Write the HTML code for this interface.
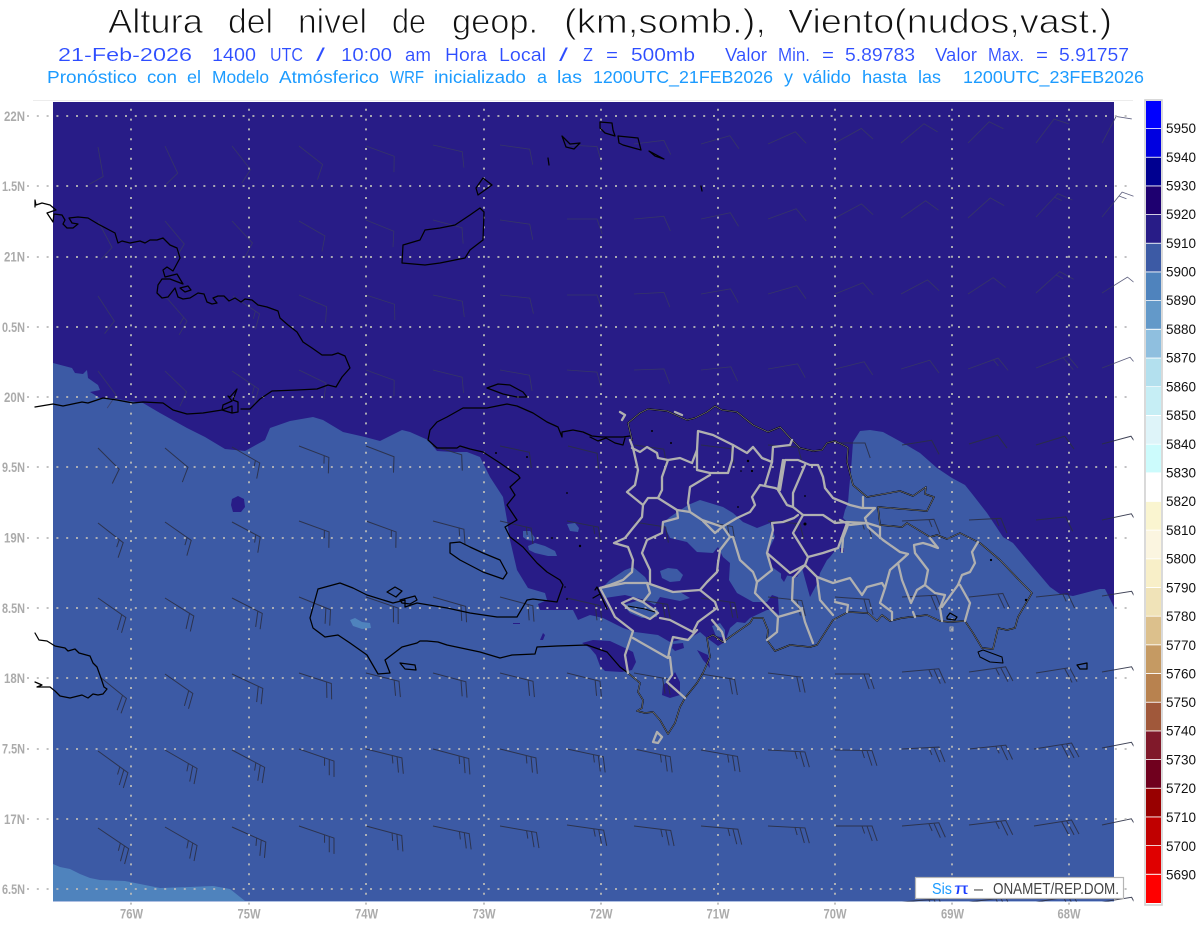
<!DOCTYPE html>
<html lang="es"><head><meta charset="utf-8"><title>Altura del nivel de geop.</title>
<style>
html,body{margin:0;padding:0;background:#fff}
svg{display:block}
text{font-family:"Liberation Sans",sans-serif}
.t{font-size:34px;fill:#111;stroke:#fff;stroke-width:.9}
.l2{font-size:18.5px;fill:#2d4dff;stroke:#fff;stroke-width:.12}
.l3{font-size:17.5px;fill:#1c9bff}
.ax{font-size:13.5px;font-weight:700;fill:#ababab}
.lg{font-size:13.5px;fill:#111}
</style></head><body>
<svg width="1200" height="927" viewBox="0 0 1200 927" xmlns="http://www.w3.org/2000/svg">
<defs>
<clipPath id="bc"><rect x="30" y="100" width="1103.5" height="801.5"/></clipPath>
<path id="a" d="M0 0H30l5.2 15"/>
<path id="b" d="M0 0H32l5.2 15M27 0l2.6 7.5"/>
<path id="c" d="M0 0H34l5.2 15M29 0l5.2 15"/>
<path id="d" d="M0 0H37l5.2 15M32 0l5.2 15M27 0l2.6 7.5"/>
<path id="e" d="M0 0H38l5.2 15M33 0l5.2 15M28 0l5.2 15"/>
</defs>
<rect width="1200" height="927" fill="#fff"/>

<!-- Titles -->
<g>
<text class="t" x="108" y="33" textLength="95" lengthAdjust="spacingAndGlyphs">Altura</text>
<text class="t" x="228" y="33" textLength="45" lengthAdjust="spacingAndGlyphs">del</text>
<text class="t" x="298" y="33" textLength="69" lengthAdjust="spacingAndGlyphs">nivel</text>
<text class="t" x="392" y="33" textLength="34" lengthAdjust="spacingAndGlyphs">de</text>
<text class="t" x="452" y="33" textLength="86" lengthAdjust="spacingAndGlyphs">geop.</text>
<text class="t" x="564" y="33" textLength="202" lengthAdjust="spacingAndGlyphs">(km,somb.),</text>
<text class="t" x="788" y="33" textLength="324" lengthAdjust="spacingAndGlyphs">Viento(nudos,vast.)</text>
</g>
<g>
<text class="l2" x="58" y="61" textLength="134" lengthAdjust="spacingAndGlyphs">21-Feb-2026</text>
<text class="l2" x="212" y="61" textLength="44" lengthAdjust="spacingAndGlyphs">1400</text>
<text class="l2" x="270" y="61" textLength="33" lengthAdjust="spacingAndGlyphs">UTC</text>
<text class="l2" x="316" y="61" textLength="9" lengthAdjust="spacingAndGlyphs">/</text>
<text class="l2" x="341" y="61" textLength="51" lengthAdjust="spacingAndGlyphs">10:00</text>
<text class="l2" x="405" y="61" textLength="26" lengthAdjust="spacingAndGlyphs">am</text>
<text class="l2" x="445" y="61" textLength="42" lengthAdjust="spacingAndGlyphs">Hora</text>
<text class="l2" x="499" y="61" textLength="47" lengthAdjust="spacingAndGlyphs">Local</text>
<text class="l2" x="559" y="61" textLength="9" lengthAdjust="spacingAndGlyphs">/</text>
<text class="l2" x="583" y="61" textLength="10" lengthAdjust="spacingAndGlyphs">Z</text>
<text class="l2" x="606" y="61" textLength="12" lengthAdjust="spacingAndGlyphs">=</text>
<text class="l2" x="631" y="61" textLength="64" lengthAdjust="spacingAndGlyphs">500mb</text>
<text class="l2" x="725" y="61" textLength="42" lengthAdjust="spacingAndGlyphs">Valor</text>
<text class="l2" x="778" y="61" textLength="32" lengthAdjust="spacingAndGlyphs">Min.</text>
<text class="l2" x="822" y="61" textLength="12" lengthAdjust="spacingAndGlyphs">=</text>
<text class="l2" x="845" y="61" textLength="70" lengthAdjust="spacingAndGlyphs">5.89783</text>
<text class="l2" x="935" y="61" textLength="42" lengthAdjust="spacingAndGlyphs">Valor</text>
<text class="l2" x="988" y="61" textLength="36" lengthAdjust="spacingAndGlyphs">Max.</text>
<text class="l2" x="1036" y="61" textLength="12" lengthAdjust="spacingAndGlyphs">=</text>
<text class="l2" x="1059" y="61" textLength="70" lengthAdjust="spacingAndGlyphs">5.91757</text>
</g>
<g>
<text class="l3" x="47" y="83" textLength="90" lengthAdjust="spacingAndGlyphs">Pronóstico</text>
<text class="l3" x="147" y="83" textLength="30" lengthAdjust="spacingAndGlyphs">con</text>
<text class="l3" x="187" y="83" textLength="14" lengthAdjust="spacingAndGlyphs">el</text>
<text class="l3" x="212" y="83" textLength="57" lengthAdjust="spacingAndGlyphs">Modelo</text>
<text class="l3" x="279" y="83" textLength="100" lengthAdjust="spacingAndGlyphs">Atmósferico</text>
<text class="l3" x="390" y="83" textLength="34" lengthAdjust="spacingAndGlyphs">WRF</text>
<text class="l3" x="434" y="83" textLength="92" lengthAdjust="spacingAndGlyphs">inicializado</text>
<text class="l3" x="537" y="83" textLength="10" lengthAdjust="spacingAndGlyphs">a</text>
<text class="l3" x="557" y="83" textLength="25" lengthAdjust="spacingAndGlyphs">las</text>
<text class="l3" x="593" y="83" textLength="180" lengthAdjust="spacingAndGlyphs">1200UTC_21FEB2026</text>
<text class="l3" x="784" y="83" textLength="9" lengthAdjust="spacingAndGlyphs">y</text>
<text class="l3" x="803" y="83" textLength="48" lengthAdjust="spacingAndGlyphs">válido</text>
<text class="l3" x="862" y="83" textLength="45" lengthAdjust="spacingAndGlyphs">hasta</text>
<text class="l3" x="918" y="83" textLength="23" lengthAdjust="spacingAndGlyphs">las</text>
<text class="l3" x="963" y="83" textLength="181" lengthAdjust="spacingAndGlyphs">1200UTC_23FEB2026</text>
</g>

<!-- frame line -->
<path d="M33 100.5H1133" stroke="#ececec" stroke-width="1"/>

<!-- Map fills -->
<rect x="53" y="102" width="1061" height="799" fill="#3c5aa5"/>
<rect x="53" y="901" width="1061" height="1" fill="#aebfe2"/>
<path fill="#281c87" d="M53 102H1114V607L1105 589 1100 589 1073 596 1060 594 1050 587 1033 567 1013 543 1003 537 987 513 973 495 965 485 952 478 937 468 920 453 903 443 883 432 870 430 860 431 853 442 851 470 849 490 848 503 845 510 843 518 847 522 844 533 838 547 830 557 827 560 820 573 818 582 810 597 802 568 797 577 783 575 772 567 767 553 775 537 770 523 757 528 743 522 733 513 723 507 700 500 688 505 670 517 663 523 670 538 687 542 697 552 713 553 718 547 723 557 730 563 729 580 737 593 753 602 767 602 772 595 778 597 779 615 773 610 767 610 750 618 745 623 737 622 730 628 725 642 718 646 707 638 700 632 690 638 670 642 658 635 635 632 623 628 603 618 590 615 578 620 573 610 540 610 538 604 547 600 545 593 528 588 517 570 510 540 507 520 503 497 490 477 480 457 467 452 453 452 437 451 428 440 410 432 402 430 380 441 365 437 343 432 323 420 313 417 290 421 270 428 265 440 245 451 225 449 205 437 187 428 160 413 143 403 110 398 100 398 90 392 100 390 98 385 88 378 87 370 83 374 75 373 72 368 53 363Z"/>
<g fill="#3c5aa5">
<path d="M567 524 575 523 579 528 578 532 570 531Z"/>
<path d="M523 531 530 531 535 538 534 541 527 540 523 537Z"/>
<path d="M528 546 535 543 545 546 555 551 557 556 548 556 535 553 529 550Z"/>
<path d="M600 590 610 580 625 570 633 567 645 577 650 585 667 590 680 592 690 598 680 601 660 597 655 605 645 600 625 595 605 598Z"/>
<path d="M640 600 658 610 657 617 642 618 630 613 623 605Z"/>
<path d="M660 571 668 568 677 569 683 575 680 581 670 582 662 578Z"/>
<path d="M712 626 720 623 725 630 725 638 716 636Z"/>
<path d="M610 580 620 576 635 574 640 590 615 590Z"/>
</g>
<g fill="#281c87">
<path d="M232 499 238 496 244 499 245 507 241 512 233 512 231 505Z"/>
<path d="M582 643 593 640 610 641 625 648 633 652 636 662 632 670 622 672 605 671 600 666 596 655 590 648Z"/>
<path d="M673 644 683 643 684 648 675 651 672 648Z"/>
<path d="M697 650 708 655 710 668 703 660Z"/>
<path d="M675 672 680 682 680 695 670 698 662 695 663 685 670 680Z"/>
<path d="M781 572 785 570 787 576 784 582 781 578Z"/>
<path d="M540 640 543 633 545 635 543 640Z"/>
<path d="M513 623H520V624H513Z"/>
<path d="M840 548H844V552H840Z"/>
</g>
<g fill="#4f83bd">
<path d="M350 620 355 618 362 622 370 623 371 628 362 629 353 626Z"/>
<path d="M53 864 60 867 70 869 80 874 90 878 100 880 125 881 140 884 160 888 190 887 213 886 230 889 245 901H53Z"/>
</g>

<!-- Wind barbs -->
<g clip-path="url(#bc)" fill="none" stroke="#3a3c62" stroke-width=".85" opacity=".8">
<use href="#a" transform="translate(98 147)rotate(80)"/><use href="#a" transform="translate(165 146)rotate(65)"/><use href="#a" transform="translate(232 146)rotate(52)"/><use href="#a" transform="translate(299 146)rotate(38)"/><use href="#a" transform="translate(366 146)rotate(20)"/><use href="#a" transform="translate(433 145)rotate(13)"/><use href="#a" transform="translate(500 145)rotate(8)"/><use href="#a" transform="translate(567 145)rotate(3)"/><use href="#a" transform="translate(634 144)rotate(-7)"/><use href="#a" transform="translate(701 144)rotate(-16)"/><use href="#a" transform="translate(768 144)rotate(-24)"/><use href="#a" transform="translate(835 143)rotate(-29)"/><use href="#a" transform="translate(901 143)rotate(-40)"/><use href="#a" transform="translate(968 143)rotate(-45)"/><use href="#a" transform="translate(1036 143)rotate(-53)"/><use href="#a" transform="translate(1102 143)rotate(-62)"/>
<use href="#a" transform="translate(98 221)rotate(62)"/><use href="#a" transform="translate(165 221)rotate(50)"/><use href="#a" transform="translate(232 221)rotate(47)"/><use href="#a" transform="translate(299 221)rotate(30)"/><use href="#a" transform="translate(366 220)rotate(22)"/><use href="#a" transform="translate(433 220)rotate(15)"/><use href="#a" transform="translate(500 220)rotate(8)"/><use href="#a" transform="translate(567 219)rotate(0)"/><use href="#a" transform="translate(634 219)rotate(-5)"/><use href="#a" transform="translate(701 219)rotate(-12)"/><use href="#a" transform="translate(768 219)rotate(-20)"/><use href="#a" transform="translate(835 218)rotate(-28)"/><use href="#a" transform="translate(901 218)rotate(-35)"/><use href="#a" transform="translate(968 218)rotate(-42)"/><use href="#b" transform="translate(1036 217)rotate(-47)"/><use href="#b" transform="translate(1102 217)rotate(-51)"/>
<use href="#a" transform="translate(98 296)rotate(57)"/><use href="#b" transform="translate(166 297)rotate(49)"/><use href="#b" transform="translate(233 296)rotate(34)"/><use href="#a" transform="translate(299 295)rotate(23)"/><use href="#a" transform="translate(366 295)rotate(18)"/><use href="#a" transform="translate(433 295)rotate(12)"/><use href="#a" transform="translate(500 295)rotate(6)"/><use href="#a" transform="translate(567 295)rotate(0)"/><use href="#a" transform="translate(634 294)rotate(-3)"/><use href="#a" transform="translate(701 294)rotate(-10)"/><use href="#a" transform="translate(768 294)rotate(-16)"/><use href="#a" transform="translate(835 294)rotate(-22)"/><use href="#a" transform="translate(901 294)rotate(-28)"/><use href="#a" transform="translate(968 294)rotate(-33)"/><use href="#b" transform="translate(1036 293)rotate(-42)"/><use href="#a" transform="translate(1102 293)rotate(-32)"/>
<use href="#a" transform="translate(98 371)rotate(53)"/><use href="#a" transform="translate(165 371)rotate(44)"/><use href="#b" transform="translate(232 371)rotate(34)"/><use href="#a" transform="translate(299 370)rotate(26)"/><use href="#a" transform="translate(366 370)rotate(20)"/><use href="#a" transform="translate(433 370)rotate(14)"/><use href="#a" transform="translate(500 370)rotate(10)"/><use href="#a" transform="translate(567 370)rotate(4)"/><use href="#a" transform="translate(634 370)rotate(-2)"/><use href="#a" transform="translate(701 370)rotate(-6)"/><use href="#a" transform="translate(768 369)rotate(-10)"/><use href="#a" transform="translate(835 369)rotate(-14)"/><use href="#a" transform="translate(901 369)rotate(-17)"/><use href="#b" transform="translate(968 369)rotate(-20)"/><use href="#c" transform="translate(1036 368)rotate(-21)"/><use href="#a" transform="translate(1102 368)rotate(-21)"/>
</g>
<g clip-path="url(#bc)" fill="none" stroke="#2b2f45" stroke-width="1" opacity=".9">
<use href="#a" transform="translate(98 448)rotate(45)"/><use href="#a" transform="translate(165 448)rotate(40)"/><use href="#b" transform="translate(232 447)rotate(30)"/><use href="#b" transform="translate(299 446)rotate(21)"/><use href="#a" transform="translate(366 446)rotate(21)"/><use href="#a" transform="translate(433 446)rotate(17)"/><use href="#a" transform="translate(500 446)rotate(12)"/><use href="#a" transform="translate(568 446)rotate(14)"/><use href="#a" transform="translate(634 445)rotate(8)"/><use href="#a" transform="translate(701 445)rotate(7)"/><use href="#a" transform="translate(768 445)rotate(4)"/><use href="#a" transform="translate(835 443)rotate(0)"/><use href="#a" transform="translate(902 445)rotate(-9)"/><use href="#a" transform="translate(969 444)rotate(-17)"/><use href="#a" transform="translate(1036 445)rotate(-17)"/><use href="#a" transform="translate(1102 444)rotate(-15)"/>
<use href="#b" transform="translate(98 523)rotate(38)"/><use href="#b" transform="translate(165 522)rotate(35)"/><use href="#b" transform="translate(232 522)rotate(28)"/><use href="#b" transform="translate(299 521)rotate(20)"/><use href="#b" transform="translate(366 521)rotate(20)"/><use href="#b" transform="translate(433 521)rotate(15)"/><use href="#b" transform="translate(500 521)rotate(13)"/><use href="#b" transform="translate(567 521)rotate(11)"/><use href="#b" transform="translate(634 522)rotate(9)"/><use href="#b" transform="translate(701 521)rotate(10)"/><use href="#b" transform="translate(768 521)rotate(5)"/><use href="#b" transform="translate(835 521)rotate(2)"/><use href="#b" transform="translate(902 521)rotate(-3)"/><use href="#b" transform="translate(969 520)rotate(-3)"/><use href="#a" transform="translate(1036 520)rotate(-6)"/><use href="#a" transform="translate(1102 520)rotate(-12)"/>
<use href="#c" transform="translate(98 598)rotate(35)"/><use href="#c" transform="translate(165 598)rotate(32)"/><use href="#c" transform="translate(232 598)rotate(27)"/><use href="#c" transform="translate(299 597)rotate(22)"/><use href="#c" transform="translate(366 597)rotate(19)"/><use href="#c" transform="translate(433 597)rotate(16)"/><use href="#c" transform="translate(500 597)rotate(15)"/><use href="#c" transform="translate(567 598)rotate(13)"/><use href="#c" transform="translate(634 599)rotate(9)"/><use href="#c" transform="translate(701 598)rotate(8)"/><use href="#c" transform="translate(768 597)rotate(6)"/><use href="#c" transform="translate(835 597)rotate(4)"/><use href="#c" transform="translate(902 597)rotate(-3)"/><use href="#c" transform="translate(969 597)rotate(-6)"/><use href="#b" transform="translate(1036 597)rotate(-6)"/><use href="#a" transform="translate(1102 596)rotate(-9)"/>
<use href="#c" transform="translate(100 677)rotate(39)"/><use href="#c" transform="translate(165 674)rotate(35)"/><use href="#c" transform="translate(232 674)rotate(25)"/><use href="#c" transform="translate(299 673)rotate(18)"/><use href="#c" transform="translate(366 673)rotate(14)"/><use href="#c" transform="translate(433 673)rotate(15)"/><use href="#c" transform="translate(500 673)rotate(14)"/><use href="#c" transform="translate(567 673)rotate(14)"/><use href="#c" transform="translate(634 673)rotate(10)"/><use href="#c" transform="translate(701 674)rotate(9)"/><use href="#c" transform="translate(768 673)rotate(7)"/><use href="#c" transform="translate(835 674)rotate(0)"/><use href="#d" transform="translate(902 672)rotate(-5)"/><use href="#d" transform="translate(969 672)rotate(-8)"/><use href="#c" transform="translate(1036 673)rotate(-9)"/><use href="#a" transform="translate(1102 672)rotate(-10)"/>
<use href="#d" transform="translate(98 751)rotate(36)"/><use href="#d" transform="translate(165 750)rotate(30)"/><use href="#d" transform="translate(232 750)rotate(28)"/><use href="#d" transform="translate(299 749)rotate(19)"/><use href="#d" transform="translate(366 749)rotate(14)"/><use href="#d" transform="translate(433 749)rotate(15)"/><use href="#d" transform="translate(500 749)rotate(14)"/><use href="#d" transform="translate(567 749)rotate(12)"/><use href="#d" transform="translate(634 749)rotate(12)"/><use href="#d" transform="translate(701 750)rotate(10)"/><use href="#d" transform="translate(768 750)rotate(3)"/><use href="#d" transform="translate(835 750)rotate(1)"/><use href="#d" transform="translate(902 749)rotate(-3)"/><use href="#d" transform="translate(969 749)rotate(-6)"/><use href="#e" transform="translate(1034 749)rotate(-9)"/><use href="#a" transform="translate(1102 748)rotate(-11)"/>
<use href="#d" transform="translate(98 828)rotate(34)"/><use href="#d" transform="translate(165 827)rotate(30)"/><use href="#d" transform="translate(232 827)rotate(24)"/><use href="#d" transform="translate(299 826)rotate(19)"/><use href="#d" transform="translate(366 826)rotate(15)"/><use href="#d" transform="translate(433 826)rotate(12)"/><use href="#d" transform="translate(500 826)rotate(10)"/><use href="#d" transform="translate(567 825)rotate(8)"/><use href="#d" transform="translate(634 826)rotate(7)"/><use href="#d" transform="translate(701 826)rotate(5)"/><use href="#d" transform="translate(768 826)rotate(3)"/><use href="#d" transform="translate(835 826)rotate(0)"/><use href="#d" transform="translate(902 826)rotate(-5)"/><use href="#d" transform="translate(969 825)rotate(-7)"/><use href="#e" transform="translate(1034 826)rotate(-9)"/><use href="#a" transform="translate(1102 825)rotate(-12)"/>
<use href="#d" transform="translate(902 902)rotate(-5)"/><use href="#d" transform="translate(969 902)rotate(-7)"/><use href="#e" transform="translate(1036 902)rotate(-9)"/><use href="#a" transform="translate(1102 902)rotate(-9)"/>
</g>

<!-- Grid -->
<g fill="none" stroke="#b9b9b9" stroke-width="1.8" stroke-dasharray="2 7.8">
<path d="M27 116H1133M27 186H1133M27 257H1133M27 327H1133M27 397H1133M27 467H1133M27 538H1133M27 608H1133M27 678H1133M27 749H1133M27 819H1133M27 889H1133"/>
<path d="M131 108.8V907M249 108.8V907M366 108.8V907M484 108.8V907M601 108.8V907M718 108.8V907M835 108.8V907M952 108.8V907M1069 108.8V907"/>
</g>

<!-- Coasts -->
<g fill="none" stroke="#000" stroke-width="1.25" stroke-linejoin="round" stroke-linecap="round">
<path d="M35 207 35 200 36 205 42 203 50 205 56 210 47 213 53 222 54 214 62 215 65 220 63 224 67 228 73 228 78 224 72 223 69 218 78 217 88 218 98 224 115 233 118 243 122 241 130 243 140 241 145 243 150 240 157 240 163 238 170 245 177 248 180 258 173 271 167 267 163 270 165 277 177 274 183 284 170 279 162 279 158 285 157 293 162 298 168 297 175 288 178 297 183 299 190 298 198 293 204 294 207 302 212 304 217 303 213 298 218 296 224 296 229 301 235 298 241 302 245 299 252 300 258 305 267 307 278 311 280 318 288 325 297 332 303 342 312 348 322 355 332 355 338 353 345 356 350 368 342 377 336 387 328 385 317 389 297 390 272 391 260 399 250 409 241 409"/>
<path d="M35 407 53 404 63 406 82 402 88 403 103 398 117 400 133 403 143 402 163 403 173 410 187 414 203 413 222 410 232 413 238 412 238 402 233 400 237 389 230 397 228 396 232 401 223 405 222 410 232 406 232 413"/>
<path d="M180 288 188 286 191 290 185 292Z"/>
<path d="M35 633 39 640 47 641 55 646 65 648 68 651 75 649 79 653 90 656 93 663 97 667 101 678 104 687 107 689 103 694 98 695 93 694 88 698 82 695 70 698 60 696 55 691 50 687 37 687 42 685 35 682"/>
<path d="M548 158 549 165"/>
<path d="M562 136 566 147 574 149 580 143 570 144Z"/>
<path d="M600 122 612 123 613 130 615 136 605 133 600 128Z"/>
<path d="M618 136 638 138 641 150 623 145 619 143Z"/>
<path d="M649 151 664 159 655 156Z"/>
<path d="M701 186 702 191"/>
<path d="M476 188 483 178 492 185 478 195Z"/>
<path d="M402 263 403 245 420 240 425 230 440 228 455 225 470 215 480 208 484 212 483 240 470 250 465 258 440 263 425 265Z"/>
<path d="M487 388 498 384 510 385 523 392 527 397 517 397 503 394Z"/>
<path d="M450 543 460 542 470 547 483 553 500 560 507 573 503 579 483 572 460 560 450 553Z"/>
<path d="M630 436 623 437 602 437 592 436 583 432 573 430 562 432 562 437 558 427 547 422 533 413 517 406 507 404 487 408 463 408 447 417 437 422 430 430 428 440 437 448 457 448 460 446 470 449 483 452 500 463 510 470 518 475 520 478 510 487 515 495 507 505 517 520 505 527 510 537 523 547 537 563 547 572 560 580 563 585 557 602 533 599 527 600 517 617 497 617 470 613 447 608 417 603 405 607 405 600 393 603 367 595 353 588 340 583 318 589 310 618 313 628 325 637 338 635 350 643 367 655 378 674 390 673 385 660 402 647 417 643 420 641 427 641 438 642 447 645 480 652 500 658 512 655 535 654 537 647 557 646 587 645 607 652 620 667 628 673"/>
<path d="M387 592 395 587 402 591 396 597Z"/>
<path d="M400 600 415 596 417 600 410 604 402 603Z"/>
<path d="M400 663 415 665 416 670 405 669Z"/>
<path d="M595 590 597 587 607 609M593 598 600 594"/>
<path d="M590 437 598 441 606 438 615 443 623 445 625 438"/>
<path d="M1077 665 1087 663 1087 669 1080 669Z"/>
<path d="M947 617 950 613 957 617 955 620 947 619Z"/>
<path d="M628 673 640 683 638 692 643 700 642 708 637 711 645 713 653 712 660 720 668 734 675 723 680 707 685 698 697 683 703 673 710 657 707 638 713 635 723 642 737 632 750 623 753 618 763 618 768 630 767 640 772 647 775 651 790 645 810 647 817 645 833 620 848 612 868 613 877 621 882 615 890 621 902 618 927 615 940 621 950 622 965 621 973 633 982 648 993 649 998 628 1007 630 1015 628 1018 617 1025 605 1032 593 1022 583 1000 560 980 543 960 533 947 539 937 535 930 537 907 523 902 527 880 525 878 507 927 511 934 497 925 494 926 487 913 496 900 491 867 497 853 485 847 462 848 448 847 447 835 441 827 443 822 450 813 451 800 448 792 440 780 427 768 432 753 425 737 412 722 410 715 406 707 412 695 418 687 420 667 411 648 409 640 413 628 423 632 440" stroke-width="1.5"/>
<path d="M628 673 640 683 638 692 643 700 642 708 637 711 645 713 653 712 660 720 668 734 675 723 680 707 685 698 697 683 703 673 710 657 707 638 713 635 723 642 737 632 750 623 753 618 763 618 768 630 767 640 772 647 775 651 790 645 810 647 817 645 833 620 848 612 868 613 877 621 882 615 890 621 902 618 927 615 940 621 950 622 965 621 973 633 982 648 993 649 998 628 1007 630 1015 628 1018 617 1025 605 1032 593 1022 583 1000 560 980 543 960 533 947 539 937 535 930 537 907 523 902 527 880 525 878 507 927 511 934 497 925 494 926 487 913 496 900 491 867 497 853 485 847 462 848 448 847 447 835 441 827 443 822 450 813 451 800 448 792 440 780 427 768 432 753 425 737 412 722 410 715 406 707 412 695 418 687 420 667 411 648 409 640 413 628 423 632 440" stroke="#8d8d8d" stroke-width=".6"/>
<path d="M978 652 983 650 1002 657 1003 663 990 662 980 657Z" stroke-width="1"/>
</g>
<g fill="#000"><circle cx="991" cy="560" r="1.1"/><circle cx="1026" cy="600" r="1.2"/><circle cx="652" cy="431" r="1"/><circle cx="671" cy="443" r="1"/><circle cx="748" cy="461" r="1.2"/><circle cx="752" cy="471" r="1.1"/><circle cx="741" cy="471" r=".8"/><circle cx="738" cy="507" r=".9"/><circle cx="805" cy="496" r=".9"/><circle cx="805" cy="524" r="1.5"/><circle cx="567" cy="493" r=".9"/><circle cx="580" cy="546" r="1.2"/><circle cx="552" cy="538" r=".9"/><circle cx="496" cy="453" r="1"/><circle cx="527" cy="457" r="1"/><circle cx="567" cy="599" r=".9"/><circle cx="565" cy="587" r=".8"/></g>

<!-- Province borders -->
<g fill="none" stroke="#b0b0b0" stroke-width="2.3" stroke-linejoin="round" stroke-linecap="round">
<path d="M630 440 633 448 638 470 635 485 627 492 643 505 642 517 633 528 625 538 614 543 628 547 633 560 632 572 623 580 610 585 600 588 610 607 615 617 633 631 625 655 628 673"/>
<path d="M632 448 640 452 647 447 657 453 658 458 668 460 680 458 692 463 697 450 698 431 713 435 733 445 747 453 753 447 762 458 772 462 773 447 790 445 792 440"/>
<path d="M668 460 662 477 662 490 658 498 677 510 690 512 702 520 715 533 722 527 737 518 750 512 755 505 752 497 760 485 775 488 780 490 785 460 798 460 810 465 818 465 823 477 825 488 833 498 850 505 862 508 875 508 865 518 868 527 883 540 900 552 908 554 898 563 890 570 885 588 880 603 892 612 892 620"/>
<path d="M772 462 765 485"/>
<path d="M805 465 793 493 793 507 803 515 823 515 835 523 847 522 867 523"/>
<path d="M783 460 778 490 787 505 793 507"/>
<path d="M803 515 793 533 808 557 823 553 838 548 847 523"/>
<path d="M808 557 805 565 790 573 767 553 773 530 772 523 783 522 794 518 798 515"/>
<path d="M697 450 697 470 710 473 728 473 732 460 733 445"/>
<path d="M710 475 690 487 688 503 690 512"/>
<path d="M658 498 648 498 643 505"/>
<path d="M677 510 678 518 663 522 662 533 647 540 642 553 650 570 650 583"/>
<path d="M702 520 723 527 730 537 720 550 718 563 717 572 707 582 700 590"/>
<path d="M730 537 733 537 740 560 753 572 757 582 772 570 767 553"/>
<path d="M757 582 755 593 778 617 777 632 767 640"/>
<path d="M793 578 792 600 802 610 778 617"/>
<path d="M802 610 805 622 813 643"/>
<path d="M793 578 805 565 817 577 833 583 850 578 862 595 867 587 882 583 885 588"/>
<path d="M817 577 820 600 833 615"/>
<path d="M835 602 848 605 847 612"/>
<path d="M600 588 625 583 647 583 673 592 700 590 715 602 717 608 698 622 693 632 670 620 660 618"/>
<path d="M697 630 688 640 673 637 670 648 668 658 633 638"/>
<path d="M670 657 672 675 667 682 685 698"/>
<path d="M647 583 650 593 643 602"/>
<path d="M712 620 722 632 725 642"/>
<path d="M622 603 633 598 643 602 658 613 650 619 630 610Z"/>
<path d="M653 742 657 732 662 737 658 743Z"/>
<path d="M620 412 625 415 622 420M675 412 682 415"/>
<path d="M863 497 863 508"/>
<path d="M840 520 850 525 867 523 880 527 880 538"/>
<path d="M848 525 843 538 842 552"/>
<path d="M898 563 902 580 911 603 917 590 925 585 928 570 915 553 914 545 923 543 930 545 938 548 930 538"/>
<path d="M925 585 935 593 945 595 940 608 942 621"/>
<path d="M958 585 942 607"/>
<path d="M958 585 962 575 970 572 975 563 972 552 978 542"/>
<path d="M960 585 970 603 965 621"/>
<path d="M913 612 915 617"/>
<path d="M950 627 953 627 953 631 950 631Z" stroke-width="1"/>
</g>
<path d="M628 606 645 609 655 612" fill="none" stroke="#000" stroke-width="1"/>

<!-- Logo box -->
<rect x="915.5" y="877.5" width="208" height="21" fill="#fff" stroke="#b5b5b5" stroke-width="1.2"/>
<text x="932" y="894" font-size="16" fill="#1c9bff" textLength="20" lengthAdjust="spacingAndGlyphs">Sis</text>
<text x="954" y="894" font-size="16" fill="#1a3cff" textLength="15" lengthAdjust="spacingAndGlyphs">π</text>
<text x="974" y="894" font-size="16" fill="#444" textLength="9" lengthAdjust="spacingAndGlyphs">–</text>
<text x="993" y="894" font-size="16" fill="#444" textLength="126" lengthAdjust="spacingAndGlyphs">ONAMET/REP.DOM.</text>

<!-- Axis labels -->
<g text-anchor="end">
<text class="ax" x="25" y="121" textLength="21" lengthAdjust="spacingAndGlyphs">22N</text><text class="ax" x="25" y="191" textLength="23" lengthAdjust="spacingAndGlyphs">1.5N</text><text class="ax" x="25" y="261.5" textLength="21" lengthAdjust="spacingAndGlyphs">21N</text><text class="ax" x="25" y="332" textLength="23" lengthAdjust="spacingAndGlyphs">0.5N</text><text class="ax" x="25" y="402" textLength="21" lengthAdjust="spacingAndGlyphs">20N</text><text class="ax" x="25" y="472" textLength="23" lengthAdjust="spacingAndGlyphs">9.5N</text><text class="ax" x="25" y="542.5" textLength="21" lengthAdjust="spacingAndGlyphs">19N</text><text class="ax" x="25" y="613" textLength="23" lengthAdjust="spacingAndGlyphs">8.5N</text><text class="ax" x="25" y="683" textLength="21" lengthAdjust="spacingAndGlyphs">18N</text><text class="ax" x="25" y="753.5" textLength="23" lengthAdjust="spacingAndGlyphs">7.5N</text><text class="ax" x="25" y="824" textLength="21" lengthAdjust="spacingAndGlyphs">17N</text><text class="ax" x="25" y="894" textLength="23" lengthAdjust="spacingAndGlyphs">6.5N</text>
</g>
<g text-anchor="middle">
<text class="ax" x="131.5" y="918.5" textLength="23" lengthAdjust="spacingAndGlyphs">76W</text><text class="ax" x="249" y="918.5" textLength="23" lengthAdjust="spacingAndGlyphs">75W</text><text class="ax" x="366.5" y="918.5" textLength="23" lengthAdjust="spacingAndGlyphs">74W</text><text class="ax" x="484" y="918.5" textLength="23" lengthAdjust="spacingAndGlyphs">73W</text><text class="ax" x="601" y="918.5" textLength="23" lengthAdjust="spacingAndGlyphs">72W</text><text class="ax" x="718" y="918.5" textLength="23" lengthAdjust="spacingAndGlyphs">71W</text><text class="ax" x="835" y="918.5" textLength="23" lengthAdjust="spacingAndGlyphs">70W</text><text class="ax" x="952.5" y="918.5" textLength="23" lengthAdjust="spacingAndGlyphs">69W</text><text class="ax" x="1069" y="918.5" textLength="23" lengthAdjust="spacingAndGlyphs">68W</text>
</g>

<!-- Legend -->
<rect x="1145" y="100" width="17" height="805" fill="#fff" stroke="#d0d0d0" stroke-width="1.6"/>
<g>
<rect x="1146" y="101" width="15" height="27.2" fill="#0000ff"/>
<rect x="1146" y="129" width="15" height="27.8" fill="#0000e0"/>
<rect x="1146" y="157.7" width="15" height="27.8" fill="#000090"/>
<rect x="1146" y="186.4" width="15" height="27.8" fill="#1e0070"/>
<rect x="1146" y="215" width="15" height="27.8" fill="#281c87"/>
<rect x="1146" y="243.7" width="15" height="27.8" fill="#3c5aa5"/>
<rect x="1146" y="272.4" width="15" height="27.8" fill="#4f83bd"/>
<rect x="1146" y="301" width="15" height="27.8" fill="#6399c9"/>
<rect x="1146" y="329.8" width="15" height="27.8" fill="#8fbfdf"/>
<rect x="1146" y="358.5" width="15" height="27.8" fill="#b3e0ee"/>
<rect x="1146" y="387" width="15" height="28" fill="#c6eef5"/>
<rect x="1146" y="416" width="15" height="27.8" fill="#def4f9"/>
<rect x="1146" y="444.6" width="15" height="27.8" fill="#ccfbfc"/>
<rect x="1146" y="501.9" width="15" height="27.8" fill="#faf5d0"/>
<rect x="1146" y="530.6" width="15" height="27.8" fill="#fbf5e0"/>
<rect x="1146" y="559.3" width="15" height="27.8" fill="#f8efc8"/>
<rect x="1146" y="588" width="15" height="27.8" fill="#f0e3b8"/>
<rect x="1146" y="616.6" width="15" height="27.8" fill="#dcc08c"/>
<rect x="1146" y="645.3" width="15" height="27.8" fill="#c59a63"/>
<rect x="1146" y="674" width="15" height="27.8" fill="#b8824f"/>
<rect x="1146" y="702.7" width="15" height="27.8" fill="#a0583a"/>
<rect x="1146" y="731.4" width="15" height="27.8" fill="#80192a"/>
<rect x="1146" y="760" width="15" height="27.8" fill="#70001e"/>
<rect x="1146" y="788.7" width="15" height="27.8" fill="#980000"/>
<rect x="1146" y="817.4" width="15" height="27.8" fill="#c00000"/>
<rect x="1146" y="846" width="15" height="27.8" fill="#e00000"/>
<rect x="1146" y="874.8" width="15" height="28.2" fill="#ff0000"/>
</g>
<g>
<text class="lg" x="1166" y="133">5950</text><text class="lg" x="1166" y="162">5940</text><text class="lg" x="1166" y="190.5">5930</text><text class="lg" x="1166" y="219">5920</text><text class="lg" x="1166" y="248">5910</text><text class="lg" x="1166" y="276.5">5900</text><text class="lg" x="1166" y="305">5890</text><text class="lg" x="1166" y="334">5880</text><text class="lg" x="1166" y="362.5">5870</text><text class="lg" x="1166" y="391.5">5860</text><text class="lg" x="1166" y="420">5850</text><text class="lg" x="1166" y="449">5840</text><text class="lg" x="1166" y="477.5">5830</text><text class="lg" x="1166" y="506">5820</text><text class="lg" x="1166" y="535">5810</text><text class="lg" x="1166" y="563.5">5800</text><text class="lg" x="1166" y="592.5">5790</text><text class="lg" x="1166" y="621">5780</text><text class="lg" x="1166" y="650">5770</text><text class="lg" x="1166" y="678.5">5760</text><text class="lg" x="1166" y="707">5750</text><text class="lg" x="1166" y="735.5">5740</text><text class="lg" x="1166" y="764.5">5730</text><text class="lg" x="1166" y="793">5720</text><text class="lg" x="1166" y="822">5710</text><text class="lg" x="1166" y="851">5700</text><text class="lg" x="1166" y="879.5">5690</text>
</g>
</svg>
</body></html>
